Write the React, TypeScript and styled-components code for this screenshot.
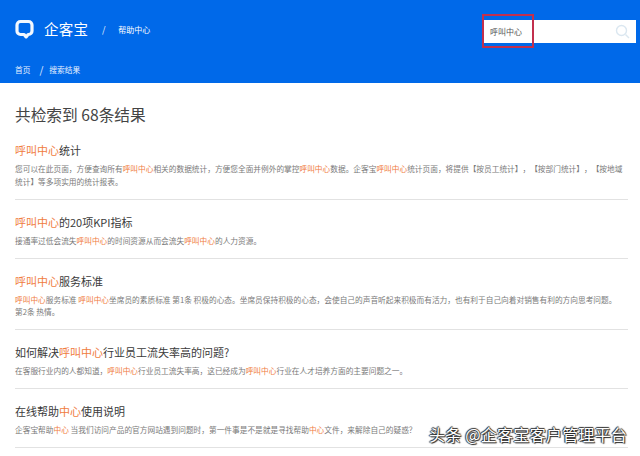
import React from "react";
import styled, { createGlobalStyle } from "styled-components";

const Global = createGlobalStyle`
  html, body { margin: 0; padding: 0; background: #fff; }
  body { font-family: "Noto Sans CJK SC", "Liberation Sans", sans-serif; }
  #root { width: 640px; height: 456px; overflow: hidden; }
`;
const Page = styled.div`position: relative; width: 640px; height: 456px; overflow: hidden; background: #fff;`;
const Header = styled.header`height: 83px; background: #0069e9; color: #fff; padding: 0 4px 0 15px; box-sizing: border-box; display: flex; flex-direction: column;`;
const TopRow = styled.div`height: 58px; display: flex; align-items: center;`;
const Logo = styled.svg`width: 19px; height: 20px; margin-right: 10px; flex: none;`;
const Brand = styled.span`font-size: 14.5px; line-height: 20px; letter-spacing: .2px;`;
const Sep = styled.span`font-size: 9px; margin: 0 12.5px 0 14px; opacity: .9;`;
const Section = styled.span`font-size: 8px; line-height: 12px; margin-top: 1px;`;
const SearchBox = styled.div`position: relative; margin: 5px 0 0 auto; width: 152px; height: 23px; background: #fff; display: flex; align-items: center; padding: 0 6px; box-sizing: border-box; color: #555; font-size: 8px; justify-content: space-between;`;
const RedMark = styled.div`position: absolute; left: -2px; top: -6px; width: 52px; height: 34px; border: 2px solid #c2304e; box-sizing: border-box;`;
const Crumbs = styled.nav`height: 22px; display: flex; align-items: center; font-size: 7.7px; color: #e8f1ff;`;
const CrumbSep = styled.span`margin: 0 6px 0 9px; font-size: 10px;`;
const Main = styled.main`padding: 0 12px 0 15px;`;
const Heading = styled.h1`margin: 0; padding-top: 20px; height: 24px; line-height: 24px; font-size: 15.7px; font-weight: 400; color: #444; box-sizing: content-box;`;
const Results = styled.div`margin-top: 1px;`;
const Item = styled.article`padding: 14px 0 10.5px; border-bottom: 1px solid #e2e2e2;`;
const Title = styled.h2`margin: 0; font-size: 11px; line-height: 16px; font-weight: 400; color: #3a3a3a;`;
const Body = styled.p`margin: 5px 0 0; font-size: 7.7px; line-height: 12.5px; color: #7a7a7a; text-spacing-trim: space-all;`;
const Hit = styled.em`font-style: normal; color: #f07c3e;`;
const Watermark = styled.div`position: absolute; left: 429px; top: 424px; font-size: 16.3px; line-height: 20px; color: #fff; white-space: nowrap; text-shadow: 0 0 1px #222, 1px 1px 1px #222, -1px 0 1px #333, 0 -1px 1px #333;`;

const H = "呼叫中心";
const C = "\uFF0C";
const Q = "\uFF1F";
const results = [
  { t: [<Hit key="a">{H}</Hit>, "统计"], b: [`您可以在此页面${C}方便查询所有`, <Hit key="a">{H}</Hit>, `相关的数据统计${C}方便您全面并例外的掌控`, <Hit key="b">{H}</Hit>, "数据。企客宝", <Hit key="c">{H}</Hit>, `统计页面${C}将提供【按员工统计】${C}【按部门统计】${C}【按地域统计】等多项实用的统计报表。`] },
  { t: [<Hit key="a">{H}</Hit>, "的20项KPI指标"], b: ["接通率过低会流失", <Hit key="a">{H}</Hit>, "的时间资源从而会流失", <Hit key="b">{H}</Hit>, "的人力资源。"] },
  { t: [<Hit key="a">{H}</Hit>, "服务标准"], b: [<Hit key="a">{H}</Hit>, "服务标准 ", <Hit key="b">{H}</Hit>, `坐席员的素质标准 第1条 积极的心态。坐席员保持积极的心态${C}会使自己的声音听起来积极而有活力${C}也有利于自己向着对销售有利的方向思考问题。`, <br key="br" />, "第2条 热情。"] },
  { t: ["如何解决", <Hit key="a">{H}</Hit>, "行业员工流失率高的问题?"], b: [`在客服行业内的人都知道${C}`, <Hit key="a">{H}</Hit>, `行业员工流失率高${C}这已经成为`, <Hit key="b">{H}</Hit>, "行业在人才培养方面的主要问题之一。"] },
  { t: ["在线帮助", <Hit key="a">中心</Hit>, "使用说明"], b: ["企客宝帮助", <Hit key="a">中心</Hit>, ` 当我们访问产品的官方网站遇到问题时${C}第一件事是不是就是寻找帮助`, <Hit key="b">中心</Hit>, `文件${C}来解除自己的疑惑${Q}`] },
];

export default function App() {
  return (
    <Page>
      <Global />
      <Header>
        <TopRow>
          <Logo viewBox="0 0 19 20" fill="none">
            <path d="M5.5 2.5h8A3.5 3.5 0 0 1 17 6v6a3.5 3.5 0 0 1-3.5 3.5h-.4l-2 2.4-2-2.4H5.5A3.5 3.5 0 0 1 2 12V6a3.5 3.5 0 0 1 3.5-3.5Z" stroke="#f2f8ff" strokeWidth="3.2" strokeLinejoin="round" />
          </Logo>
          <Brand>企客宝</Brand>
          <Sep>/</Sep>
          <Section>帮助中心</Section>
          <SearchBox>
            <RedMark />
            <span>呼叫中心</span>
            <svg width="15" height="15" viewBox="0 0 15 15" fill="none" stroke="#dbe7f0" strokeWidth="1.4"><circle cx="6.5" cy="6.5" r="5" /><path d="m10.5 10.5 3.5 3.5" /></svg>
          </SearchBox>
        </TopRow>
        <Crumbs>
          <span>首页</span>
          <CrumbSep>/</CrumbSep>
          <span>搜索结果</span>
        </Crumbs>
      </Header>
      <Main>
        <Heading>共检索到 68条结果</Heading>
        <Results>
          {results.map((r, i) => (
            <Item key={i}>
              <Title>{r.t}</Title>
              <Body>{r.b}</Body>
            </Item>
          ))}
        </Results>
      </Main>
      <Watermark>头条 @企客宝客户管理平台</Watermark>
    </Page>
  );
}
